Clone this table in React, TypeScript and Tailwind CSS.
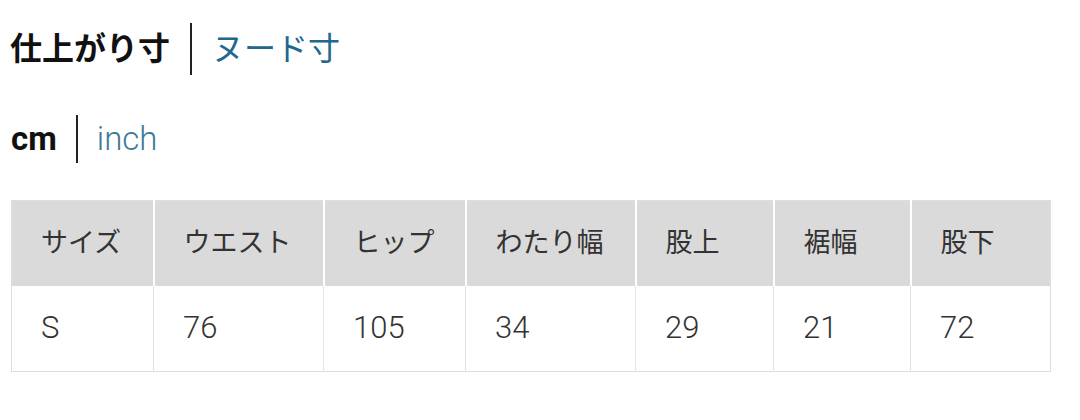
const headers = ["サイズ", "ウエスト", "ヒップ", "わたり幅", "股上", "裾幅", "股下"];
const values = ["S", "76", "105", "34", "29", "21", "72"];
const widths = ["w-[142px]", "w-[170px]", "w-[142px]", "w-[170px]", "w-[138px]", "w-[137px]", "w-[140px]"];

export default function App() {
  return (
    <div
      className="bg-white w-[1080px] h-[420px] text-[#222]"
      style={{ fontFamily: 'Roboto, "Noto Sans CJK JP", sans-serif' }}
    >
      {/* 仕上がり寸 / ヌード寸 toggle */}
      <div className="flex items-center pt-[23px] pl-[10px]">
        <span className="text-[32px] font-bold leading-[52px] text-[#111]">仕上がり寸</span>
        <span className="mx-[20px] w-[2px] h-[52px] bg-[#222]" />
        <span className="text-[32px] leading-[52px] text-[#21678e]">ヌード寸</span>
      </div>

      {/* unit toggle */}
      <div className="flex items-center mt-[40px] pl-[11px]">
        <span className="text-[33px] font-bold leading-[48px] text-[#111]">cm</span>
        <span className="mx-[19px] w-[2px] h-[48px] bg-[#222]" />
        <span className="text-[33px] font-light leading-[48px] text-[#3b7a96]">inch</span>
      </div>

      <div className="pl-[11px] mt-[37px]">
        <table className="border-collapse border border-[#dedede] text-[#333]">
          <thead>
            <tr className="bg-[#dadada]">
              {headers.map((h, i) => (
                <th
                  key={h}
                  className={`${widths[i]} h-[85px] text-[27px] font-normal text-left pl-[29px] border-l-2 border-white first:border-l-0`}
                >
                  {h}
                </th>
              ))}
            </tr>
          </thead>
          <tbody>
            <tr>
              {values.map((v, i) => (
                <td
                  key={i}
                  className={`${widths[i]} h-[86px] text-[31px] font-light text-left pl-[29px] border-l border-[#e2e2e2] first:border-l-0`}
                >
                  {v}
                </td>
              ))}
            </tr>
          </tbody>
        </table>
      </div>
    </div>
  );
}
